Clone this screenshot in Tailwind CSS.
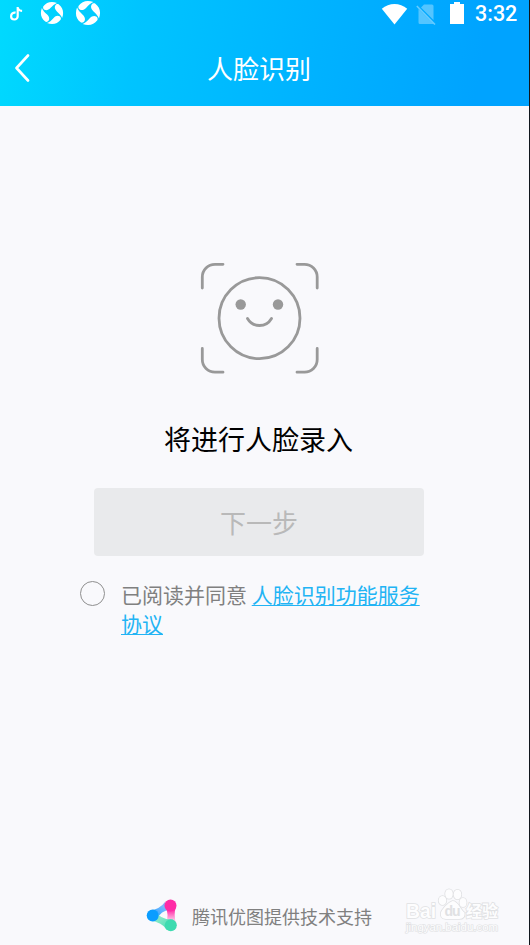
<!DOCTYPE html>
<html lang="zh-CN">
<head>
<meta charset="utf-8">
<title>人脸识别</title>
<script src="https://cdn.jsdelivr.net/npm/@tailwindcss/browser@4"></script>
</head>
<body class="w-[530px] h-[945px] overflow-hidden bg-[#f9f9fc] font-['Noto_Sans_CJK_SC',sans-serif]">
<div class="w-[530px] h-[945px] flex flex-col border-r border-[#10161c]">
  <header class="h-[106px] shrink-0 bg-linear-[100deg,#00dafe_0%,#00c4ff_26%,#00b2ff_60%,#00a3ff_90%] text-white">
    <div class="h-[27px] flex items-center justify-between pl-[9px] pr-3">
      <div class="flex items-center">
        <svg class="w-[14px] h-[16px]" viewBox="0 0 14 16" fill="none" stroke="#fff" stroke-width="2.2"><path d="M6.600 6.700C4 6.200 2.100 8 2.100 10.200c0 2 1.500 3.300 3.300 3.300s3.300-1.400 3.300-3.300V1c.2 2.300 1.800 3.800 4.400 3.900"/></svg>
        <svg class="ml-[17px] -mt-px w-6 h-6" viewBox="-12 -12 24 24" fill="#fff"><defs><path id="blade" d="M-8.600-6.800C-5.500-11-.5-12.200 5-10.100 2.300-9 .8-7.500-1.600-4.900-3.500-2.800-5.800-2.300-7.600-3.300-8.900-4.100-9.200-5.700-8.600-6.800Z"/></defs><use href="#blade"/><use href="#blade" transform="rotate(90)"/><use href="#blade" transform="rotate(180)"/><use href="#blade" transform="rotate(270)"/></svg>
        <svg class="ml-[11px] -mt-px w-[26px] h-[26px]" viewBox="-12 -12 24 24" fill="#fff"><use href="#blade"/><use href="#blade" transform="rotate(90)"/><use href="#blade" transform="rotate(180)"/><use href="#blade" transform="rotate(270)"/></svg>
      </div>
      <div class="flex items-center">
        <svg class="w-[27px] h-[22px]" viewBox="0 0 27 22"><path d="M.8 5.800C8-.5 19-.5 26.200 5.800L13.500 21.600Z" fill="#fff"/></svg>
        <svg class="ml-[8px] w-[21px] h-[22px]" viewBox="0 0 21 22"><path d="M8 1.500H16Q17.500 1.500 17.500 3V17L5 4.500ZM2.500 6L17.500 21H4Q2.500 21 2.500 19.500Z" fill="#fff" opacity=".33"/><path d="M.8 3L19 21.500" stroke="#fff" stroke-width="1.600" opacity=".4"/></svg>
        <svg class="ml-[13px] -mt-[2px] w-[14px] h-[22px]" viewBox="0 0 14 22"><path d="M4 0h6v2h4v20H0V2h4z" fill="#fff"/></svg>
        <span class="ml-[11px] font-['Roboto'] font-medium text-[21.500px] leading-[27px] w-[42px] whitespace-nowrap">3:32</span>
      </div>
    </div>
    <div class="h-[79px] flex items-center pl-3">
      <svg class="w-5 h-[30px]" viewBox="0 0 20 30" fill="none" stroke="#fff" stroke-width="2.600" stroke-linecap="round" stroke-linejoin="round"><path d="M16 3.500L4.500 16L16 28.500"/></svg>
      <h1 class="ml-[175px] mt-[2px] text-[26px] leading-[38px] font-normal">人脸识别</h1>
    </div>
  </header>
  <main class="w-[518px] flex-1 flex flex-col items-center">
    <svg class="mt-[155px] w-[120px] h-[114px]" viewBox="0 0 120 114" fill="none" stroke="#999" stroke-width="2.800" stroke-linecap="round"><path d="M3.300 27V16A12.700 12.700 0 0 1 16 3.300H24M98 3.300h7.500A12.700 12.700 0 0 1 118.200 16V27M118.200 87.500V98.500A12.700 12.700 0 0 1 105.500 111.200H98M24 111.200H16A12.700 12.700 0 0 1 3.300 98.500V87.500"/><circle cx="60.500" cy="57.200" r="40.500"/><path d="M48.500 57.500Q52.500 64.500 60.500 64.500T72.500 57.500"/><circle cx="41.700" cy="43.500" r="5.200" fill="#999" stroke="none"/><circle cx="79" cy="43.500" r="5.200" fill="#999" stroke="none"/></svg>
    <h2 class="-ml-px mt-[44px] text-[27px] leading-[40px] text-black">将进行人脸录入</h2>
    <button class="mt-[29px] w-[330px] h-[68px] pb-[2px] rounded-[4px] bg-[#e9eaec] text-[#b9b9b9] text-[26px]">下一步</button>
    <div class="mt-[24px] w-[360px] flex items-start">
      <span class="mt-px ml-px w-[25px] h-[25px] rounded-full border-[1.500px] border-[#8f8f8f] shrink-0"></span>
      <p class="ml-4 w-[300px] text-[21px] leading-[29px] text-[#808080] whitespace-nowrap">已阅读并同意&nbsp;<a class="text-[#22b4f4] underline decoration-1 underline-offset-[2px]">人脸识别功能服务<br>协议</a></p>
    </div>
  </main>
  <footer class="h-[60px] shrink-0 flex items-center pl-[146px]">
    <svg class="w-[32px] h-[34px]" viewBox="0 0 32 34"><defs><linearGradient id="a" x1="0" y1="1" x2="1" y2="0"><stop stop-color="#0a9dff"/><stop offset=".7" stop-color="#79b8ff"/><stop offset="1" stop-color="#c77be0"/></linearGradient><linearGradient id="b" x1="0" y1="0" x2="0" y2="1"><stop offset=".2" stop-color="#ff2ba6"/><stop offset=".75" stop-color="#ffc4e8"/></linearGradient><linearGradient id="c" x1="0" y1="0" x2="1" y2="1"><stop stop-color="#b5f2dc"/><stop offset=".3" stop-color="#8feacb"/><stop offset="1" stop-color="#3edbb0"/></linearGradient></defs><path d="M4 12.500Q14 11 19 4L25 12Q16 11 10 22Z" fill="url(#a)"/><path d="M18.800 8H30.200Q27 17 30.500 27H19.500Q24 17 18.800 8Z" fill="url(#b)"/><path d="M10 13Q14 22 27 21.500L21 32Q16 24 4 22.500Z" fill="url(#c)"/><circle cx="6.700" cy="17.500" r="6" fill="#0a9dff"/><circle cx="24.500" cy="7.500" r="6" fill="#ff2ba6"/><circle cx="24.800" cy="27.200" r="6" fill="#3edbb0"/></svg>
    <span class="ml-[14px] mt-px text-[18px] leading-[26px] text-[#808080]">腾讯优图提供技术支持</span>
    <svg class="-mt-[8px] ml-[32px] w-[98px] h-[48px]" viewBox="0 0 98 48" fill="#fdfdfe" stroke="#e0e1e3" stroke-width="1.600" paint-order="stroke"><g font-family="Liberation Sans"><text x="2" y="31" font-size="21" font-weight="bold" textLength="30" lengthAdjust="spacingAndGlyphs">Bai</text><path d="M48.500 14Q52 14 55.500 19.500T60.500 25.500Q61.500 32 55 32H42Q35.500 31.500 37 25.500 37.500 23.500 41 19.500T48.500 14Z"/><ellipse cx="38.500" cy="13.500" rx="3.800" ry="4.500"/><ellipse cx="45" cy="7" rx="3.800" ry="4.800"/><ellipse cx="53.500" cy="7.500" rx="3.800" ry="4.800"/><ellipse cx="59" cy="15.500" rx="3.500" ry="4.500"/><text x="40.500" y="29" font-size="14" font-weight="bold" fill="#e0e1e3" stroke="none" textLength="16">du</text><text x="2" y="43.500" font-size="10" textLength="92" lengthAdjust="spacingAndGlyphs" stroke-width="1.200">jingyan.baidu.com</text></g><text x="62" y="30" font-family="Noto Sans CJK SC" font-weight="bold" font-size="16" textLength="32">经验</text></svg>
  </footer>
</div>
</body>
</html>
